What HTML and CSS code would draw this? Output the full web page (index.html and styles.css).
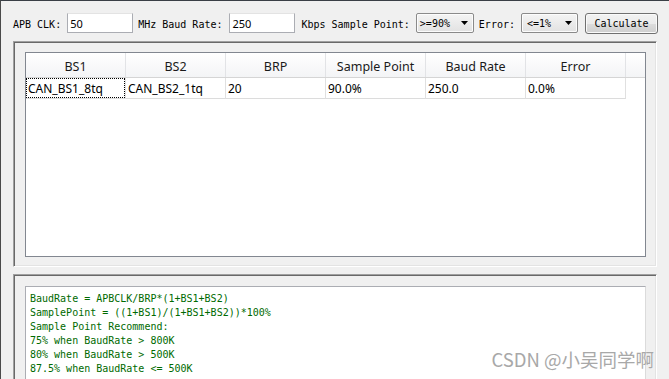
FILE: index.html
```html
<!DOCTYPE html>
<html lang="en">
<head>
    <meta charset="UTF-8">
    <meta name="viewport" content="width=device-width, initial-scale=1.0">
    <link rel="stylesheet" href="styles.css">
    <title>CAN Baud Rate Calculator</title>
</head>
<body>

    <div class="window">

        <!-- Input bar -->
        <div class="toolbar">
            <span class="label label-clk">APB CLK:</span>
            <input class="field" type="text" value="50">
            <span class="label label-baud">MHz Baud Rate:</span>
            <input class="field field-baud" type="text" value="250">
            <span class="label label-sp">Kbps Sample Point:</span>
            <div class="combo combo-sp">
                <span>&gt;=90%</span>
                <svg class="arrow" width="7" height="4" viewBox="0 0 7 4"><path d="M0 0h7L3.5 4z" fill="#000"/></svg>
            </div>
            <span class="label label-err">Error:</span>
            <div class="combo combo-err">
                <span>&lt;=1%</span>
                <svg class="arrow" width="7" height="4" viewBox="0 0 7 4"><path d="M0 0h7L3.5 4z" fill="#000"/></svg>
            </div>
            <button class="calc-button">Calculate</button>
        </div>

        <!-- Result list -->
        <div class="group group-result">
            <div class="listview">
                <div class="lv-head">
                    <div class="lv-col">BS1</div>
                    <div class="lv-col">BS2</div>
                    <div class="lv-col">BRP</div>
                    <div class="lv-col">Sample Point</div>
                    <div class="lv-col">Baud Rate</div>
                    <div class="lv-col">Error</div>
                    <div class="lv-filler"></div>
                </div>
                <div class="lv-row">
                    <div class="lv-cell focused">CAN_BS1_8tq</div>
                    <div class="lv-cell">CAN_BS2_1tq</div>
                    <div class="lv-cell">20</div>
                    <div class="lv-cell">90.0%</div>
                    <div class="lv-cell">250.0</div>
                    <div class="lv-cell">0.0%</div>
                </div>
            </div>
        </div>

        <!-- Help text -->
        <div class="group group-help">
            <div class="help-text">
                <div class="help-line">BaudRate = APBCLK/BRP*(1+BS1+BS2)</div>
                <div class="help-line">SamplePoint = ((1+BS1)/(1+BS1+BS2))*100%</div>
                <div class="help-line">Sample Point Recommend:</div>
                <div class="help-line">75% when BaudRate &gt; 800K</div>
                <div class="help-line">80% when BaudRate &gt; 500K</div>
                <div class="help-line">87.5% when BaudRate &lt;= 500K</div>
            </div>
        </div>

        <div class="watermark">CSDN @小吴同学啊</div>
    </div>

</body>
</html>
```

FILE: styles.css
```css
body {
    margin: 0;
    background-color: #f0f0f0;
}

/* Window frame */
.window {
    position: relative;
    width: 669px;
    height: 379px;
    box-sizing: border-box;
    overflow: hidden;
    background-color: #f0f0f0;
    border-top: 1px solid #3a3f46;
    border-left: 1px solid #4a4a4a;
    font-family: "DejaVu Sans Mono", "Liberation Mono", monospace;
    font-size: 10px;
}

/* Top input bar */
.toolbar {
    display: flex;
    align-items: center;
    height: 21px;
    padding: 12px 0 0 12px;
}

.label {
    white-space: pre;
    color: #000;
    margin-top: 1px;
}

.label-baud { margin-left: 5px; }
.label-sp { margin-left: 6px; }
.label-err { margin-left: 5px; }

.field {
    width: 66px;
    height: 20px;
    box-sizing: border-box;
    margin: 0 0 1px 6px;
    padding: 0 2px;
    border: 1px solid #abadb3;
    border-top-color: #e3e3e3;
    background-color: #fff;
    font-family: "Noto Sans", sans-serif;
    font-size: 11px;
    color: #000;
    outline: none;
}

.field-baud { margin-left: 7px; }

.combo {
    display: flex;
    align-items: center;
    justify-content: space-between;
    height: 20px;
    box-sizing: border-box;
    margin: 0 0 1px 6px;
    padding: 0 5px 0 3px;
    border: 1px solid #8a8a8a;
    border-radius: 2px;
    background: linear-gradient(#f4f4f4, #e2e2e2);
    box-shadow: inset 0 0 0 1px #fcfcfc;
    color: #000;
}

.combo-sp { width: 58px; }
.combo-err { width: 57px; padding-left: 5px; }

.calc-button {
    width: 73px;
    height: 21px;
    margin-left: 7px;
    padding: 0;
    border: 1px solid #707070;
    border-radius: 3px;
    background: linear-gradient(#f2f2f2 0%, #ebebeb 50%, #dddddd 51%, #cfcfcf 100%);
    box-shadow: inset 0 0 0 1px #fafafa;
    font-family: "DejaVu Sans Mono", "Liberation Mono", monospace;
    font-size: 10px;
    color: #000;
}

/* Sunken group frames */
.group {
    width: 644px;
    box-sizing: border-box;
    margin-left: 12px;
    border: 1px solid;
    border-color: #a0a0a0 #ffffff #ffffff #a0a0a0;
    box-shadow: inset 1px 1px 0 #696969, inset -1px -1px 0 #e3e3e3;
}

.group-result {
    height: 226px;
    margin-top: 7px;
    padding: 10px 10px 9px 11px;
}

.group-help {
    height: 130px;
    margin-top: 7px;
    padding: 11px 10px 0 11px;
}

/* List view */
.listview {
    height: 100%;
    box-sizing: border-box;
    border: 1px solid #828790;
    background-color: #fff;
    font-family: "Noto Sans", sans-serif;
    font-size: 12px;
    color: #000;
}

.lv-head {
    display: flex;
    height: 25px;
    box-sizing: border-box;
    border-bottom: 1px solid #d5d5d5;
    background: linear-gradient(#ffffff, #f3f4f6);
}

.lv-col {
    width: 100px;
    box-sizing: border-box;
    padding-top: 3px;
    border-right: 1px solid #e2e3e6;
    display: flex;
    align-items: center;
    justify-content: center;
    font-size: 12.5px;
    color: #1a1a1a;
}

.lv-filler {
    flex: 1;
}

.lv-row {
    display: flex;
    height: 21px;
}

.lv-cell {
    position: relative;
    width: 100px;
    box-sizing: border-box;
    padding-left: 2px;
    border-right: 1px solid #e0e0e0;
    border-bottom: 1px solid #dcdcdc;
    display: flex;
    align-items: center;
}

.lv-cell.focused::after {
    content: "";
    position: absolute;
    left: 0;
    top: 0;
    right: 0;
    bottom: 0;
    border: 1px dotted #000;
}

/* Help text area */
.help-text {
    height: 100%;
    box-sizing: border-box;
    padding: 5px 4px;
    border: 1px solid #abadb3;
    border-right-color: #dbdbdb;
    background-color: #fff;
    color: #006a00;
    line-height: 14px;
}

.help-line {
    white-space: pre;
}

/* Watermark over the corner */
.watermark {
    position: absolute;
    right: 15px;
    bottom: 7px;
    font-family: "Noto Sans CJK SC", sans-serif;
    font-size: 18.5px;
    color: #a8a8a8;
    text-shadow: 0 0 1px #fff;
}
```
